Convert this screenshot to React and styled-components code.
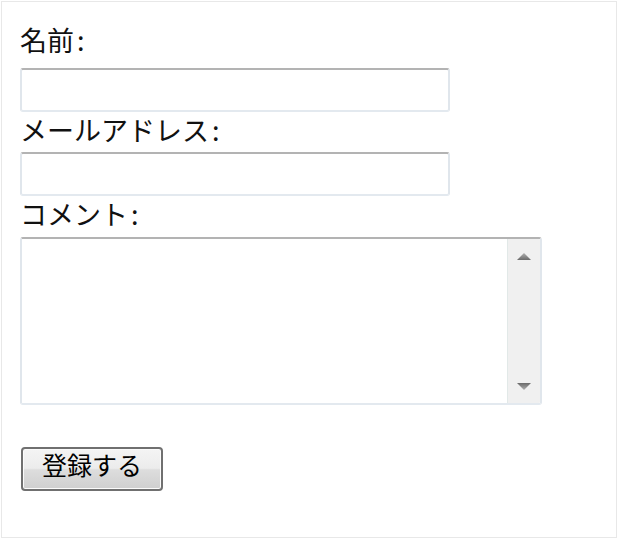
import React from "react";
import styled, { createGlobalStyle } from "styled-components";

const GlobalStyle = createGlobalStyle`
  html, body { margin: 0; padding: 0; background: #ffffff; }
  body { font-family: "Noto Sans CJK JP", "Liberation Sans", sans-serif; color: #000; }
  * { box-sizing: border-box; }
`;

const Frame = styled.form`
  margin: 1px 0 0 1px;
  width: 616px;
  height: 537px;
  border: 1px solid #e8e8e8;
  padding: 22px 0 0 18px;
  display: flex;
  flex-direction: column;
  align-items: flex-start;
`;

const Label = styled.label`
  display: block;
  font-size: 27px;
  line-height: 32px;
  height: 32px;
  margin-bottom: ${(p) => p.$gap}px;
  white-space: nowrap;
  color: #111;
`;

const Colon = styled.span`
  margin-left: 3px;
`;

const fieldBorder = `
  border-style: solid;
  border-width: 2px;
  border-color: #b3b3b3 #e0e6ec #e3e9ef #e0e6ec;
  border-radius: 3px;
  background: #fff;
`;

const TextInput = styled.input`
  ${fieldBorder}
  width: 430px;
  height: 44px;
  margin: 0 0 2px 0;
  padding: 0 4px;
  font-family: inherit;
  font-size: 24px;
  outline: none;
`;

const AreaBox = styled.div`
  ${fieldBorder}
  width: 522px;
  height: 168px;
  display: flex;
  overflow: hidden;
`;

const Area = styled.textarea`
  flex: 1;
  border: none;
  resize: none;
  outline: none;
  overflow: hidden;
  font-family: inherit;
  font-size: 24px;
  padding: 2px 4px;
  background: #fff;
`;

const Scrollbar = styled.div`
  width: 33px;
  background: #f0f0f0;
  border-left: 1px solid #e2e9e8;
  display: flex;
  flex-direction: column;
  justify-content: space-between;
`;

const Arrow = styled.div`
  height: 34px;
  display: flex;
  align-items: center;
  justify-content: center;
`;

const SubmitButton = styled.button`
  margin: 42px 0 0 1px;
  width: 142px;
  height: 44px;
  border: 2px solid #707070;
  border-radius: 4px;
  box-shadow: inset 0 0 0 1px #fbfbfb;
  background: linear-gradient(
    to bottom,
    #f4f4f4 0%,
    #ececec 48%,
    #dddddd 52%,
    #cfcfcf 100%
  );
  font-family: inherit;
  font-size: 25px;
  line-height: 30px;
  color: #000;
  padding: 0 0 10px 0;
  display: flex;
  align-items: center;
  justify-content: center;
`;

function Triangle({ up }) {
  return (
    <svg width="14" height="7" viewBox="0 0 14 7">
      <defs>
        <linearGradient id={up ? "gu" : "gd"} x1="0" y1="0" x2="0" y2="1">
          <stop offset="0" stopColor={up ? "#b0b0b0" : "#6a6a6a"} />
          <stop offset="1" stopColor={up ? "#6a6a6a" : "#b0b0b0"} />
        </linearGradient>
      </defs>
      <polygon
        points={up ? "7,0 14,7 0,7" : "0,0 14,0 7,7"}
        fill={`url(#${up ? "gu" : "gd"})`}
      />
    </svg>
  );
}

export default function App() {
  return (
    <>
      <GlobalStyle />
      <Frame onSubmit={(e) => e.preventDefault()}>
        <Label $gap={12} htmlFor="name">名前<Colon>:</Colon></Label>
        <TextInput id="name" type="text" />
        <Label $gap={6} htmlFor="mail">メールアドレス<Colon>:</Colon></Label>
        <TextInput id="mail" type="text" />
        <Label $gap={7} htmlFor="comment">コメント<Colon>:</Colon></Label>
        <AreaBox>
          <Area id="comment" />
          <Scrollbar>
            <Arrow>
              <Triangle up />
            </Arrow>
            <Arrow>
              <Triangle />
            </Arrow>
          </Scrollbar>
        </AreaBox>
        <SubmitButton type="submit">登録する</SubmitButton>
      </Frame>
    </>
  );
}
